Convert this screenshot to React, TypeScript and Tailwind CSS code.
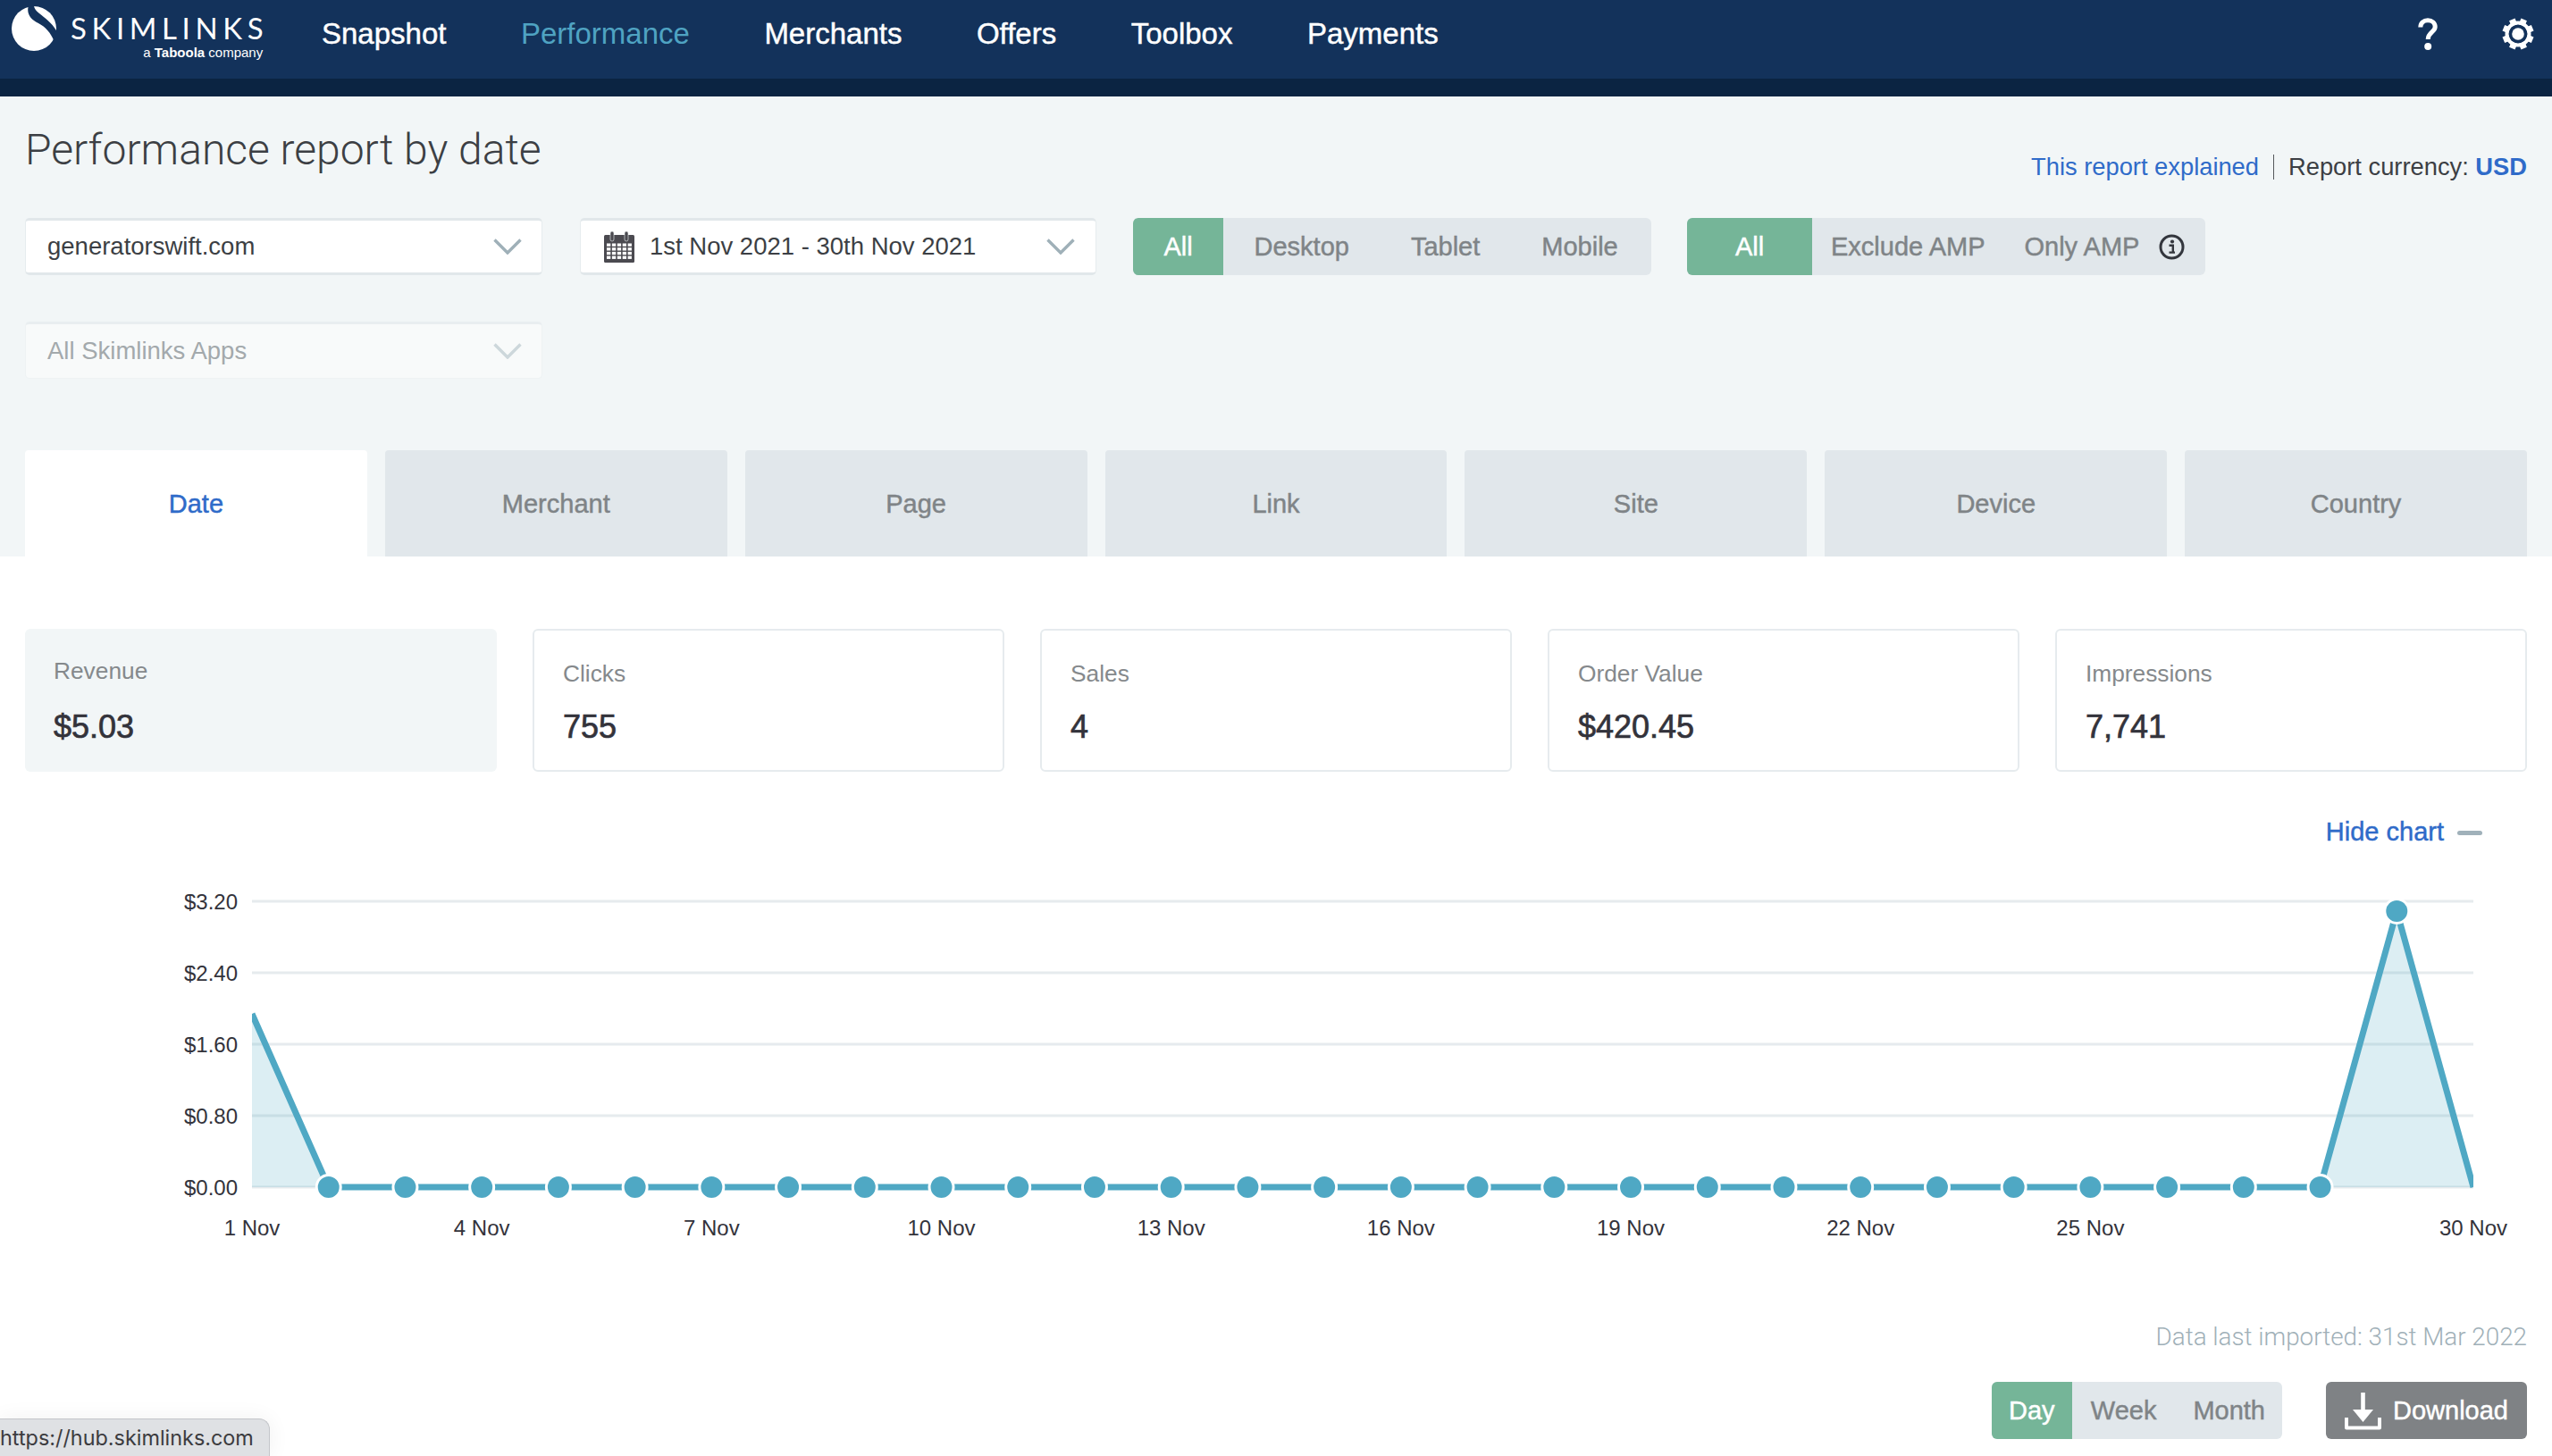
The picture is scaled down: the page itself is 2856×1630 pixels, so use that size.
const navItems = ["Snapshot", "Performance", "Merchants", "Offers", "Toolbox", "Payments"];
const tabs = ["Date", "Merchant", "Page", "Link", "Site", "Device", "Country"];
const metrics = [
  { label: "Revenue", value: "$5.03", active: true },
  { label: "Clicks", value: "755" },
  { label: "Sales", value: "4" },
  { label: "Order Value", value: "$420.45" },
  { label: "Impressions", value: "7,741" },
];

// chart geometry, in page pixels (the svg viewBox lines up with the page)
const left = 282;
const right = 2768;
const base = 1329;
const step = (right - left) / 29;
const px = (i: number) => left + i * step;
const values = Array.from({ length: 30 }, (_, i) => (i === 0 ? 1.94 : i === 28 ? 3.09 : 0));
const py = (v: number) => base - v * 100;
const linePoints = values.map((v, i) => `${px(i)},${py(v)}`).join(" ");
const yTicks = ["$3.20", "$2.40", "$1.60", "$0.80", "$0.00"];
const xTicks = [
  [0, "1 Nov"],
  [3, "4 Nov"],
  [6, "7 Nov"],
  [9, "10 Nov"],
  [12, "13 Nov"],
  [15, "16 Nov"],
  [18, "19 Nov"],
  [21, "22 Nov"],
  [24, "25 Nov"],
  [29, "30 Nov"],
] as const;

const Logo = () => (
  <div className="flex items-start w-[293px] h-[70px] pl-[13px] pt-[7px]">
    <svg width="50" height="50" viewBox="0 0 50 50" className="shrink-0">
      <circle cx="25" cy="25" r="25" fill="#fff" />
      <path d="M19 -1 C16 9 22 15 30 19 C38 23 44 30 47.5 39 L51 29 C46 19 37 13 31 8 C27 5 25 2 25 -1 Z" fill="#13325b" />
    </svg>
    <div className="ml-[16px] flex flex-col items-end text-white">
      <div className="font-['Lato',sans-serif] font-normal text-[33px] leading-[30px] mt-[9px] tracking-[5.6px] mr-[-6px]">SKIMLINKS</div>
      <div className="text-[15px] leading-[18px] mt-[4px] whitespace-nowrap">
        a <span className="font-bold">Taboola</span> company
      </div>
    </div>
  </div>
);

const Chevron = ({ light }: { light?: boolean }) => (
  <svg width="32" height="18" viewBox="0 0 32 18" fill="none" stroke={light ? "#cdd7db" : "#9fb0b8"} strokeWidth="3.4">
    <path d="M1.5 1.5 L16 16 L30.5 1.5" />
  </svg>
);

const CalendarIcon = () => (
  <svg width="34" height="35" viewBox="0 0 34 35" className="shrink-0">
    <rect x="0" y="4" width="34" height="31" rx="1.5" fill="#4b4a50" />
    <rect x="7" y="0" width="4" height="11" rx="2" fill="#4b4a50" stroke="#f2f6f7" strokeWidth="0.6" />
    <rect x="23" y="0" width="4" height="11" rx="2" fill="#4b4a50" stroke="#f2f6f7" strokeWidth="0.6" />
    {[0, 1, 2, 3].map((r) =>
      [0, 1, 2, 3, 4].map((c) => (
        <rect key={`${r}-${c}`} x={3 + c * 5.9} y={13.5 + r * 4.7} width="4.3" height="3.3" fill="#fff" />
      )),
    )}
  </svg>
);

const InfoIcon = () => (
  <svg width="29" height="29" viewBox="0 0 29 29" fill="none" className="shrink-0">
    <circle cx="14.5" cy="14.5" r="12.5" stroke="#33363d" strokeWidth="3" />
    <circle cx="15" cy="8.5" r="2.1" fill="#33363d" />
    <path d="M11.5 12.8 H15.8 V20.6 H18 M11.5 20.6 H15.8" stroke="#33363d" strokeWidth="2.4" />
  </svg>
);

const GearIcon = () => (
  <svg width="36" height="36" viewBox="0 0 36 36">
    {[22.5, 67.5, 112.5, 157.5, 202.5, 247.5, 292.5, 337.5].map((a) => (
      <rect key={a} x="14.5" y="0.5" width="7" height="7" fill="#fff" transform={`rotate(${a} 18 18)`} />
    ))}
    <circle cx="18" cy="18" r="12.5" fill="none" stroke="#fff" strokeWidth="4" />
    <circle cx="18" cy="18" r="6.8" fill="#fff" />
  </svg>
);

const HelpIcon = () => (
  <svg width="22" height="36" viewBox="0 0 22 36" fill="none">
    <path d="M2.8 10.5 C2.8 5.5 6.3 2.8 11 2.8 C15.8 2.8 19.2 5.8 19.2 10 C19.2 16 11.2 16 11.2 24" stroke="#fff" strokeWidth="5" />
    <circle cx="11.2" cy="32" r="4" fill="#fff" />
  </svg>
);

const DownloadIcon = () => (
  <svg width="41" height="42" viewBox="0 0 41 42" fill="none" className="shrink-0">
    <path d="M20.5 0 V24" stroke="#fff" strokeWidth="4.6" />
    <path d="M9 19 H32 L20.5 33 Z" fill="#fff" />
    <path d="M2 28 V39.5 H39 V28" stroke="#fff" strokeWidth="4" strokeLinejoin="round" />
  </svg>
);

const Segment = ({ active, children, className }: { active?: boolean; children: React.ReactNode; className?: string }) => (
  <div
    className={`flex items-center justify-center h-full pt-[2px] ${active ? "bg-[#75b598] text-white" : "text-[#7f8487]"} ${className ?? ""}`}
  >
    {children}
  </div>
);

const medium = "[-webkit-text-stroke:0.45px_currentColor]";

export default function App() {
  return (
    <div className="relative w-full h-[1630px] overflow-hidden bg-white font-['Liberation_Sans',sans-serif] text-[#3c3f44]">
      <header className="bg-[#0b2442] h-[108px]">
        <div className="flex items-start justify-between h-[88px] bg-[#13325b] pr-[20px]">
          <div className="flex items-start">
            <Logo />
            <nav className="flex gap-[83.5px] ml-[67px] pt-[19px]">
              {navItems.map((item) => (
                <a
                  key={item}
                  className={`text-[33px] leading-[38px] ${item === "Performance" ? "text-[#4fa3c2]" : `text-white ${medium}`}`}
                >
                  {item}
                </a>
              ))}
            </nav>
          </div>
          <div className="flex items-start gap-[72px] pt-[20px]">
            <HelpIcon />
            <GearIcon />
          </div>
        </div>
      </header>

      <section className="bg-[#f2f6f7] px-[28px] h-[515px]">
        <div className="flex justify-between items-start h-[136px]">
          <h1 className="font-['Roboto',sans-serif] font-light text-[48px] leading-[64px] pt-[28px] text-[#3c3f44]">
            Performance report by date
          </h1>
          <div className="flex items-center mt-[65px] text-[27.3px] leading-[28px]">
            <a className="text-[#2f6bc9]">This report explained</a>
            <span className="w-[1px] h-[28px] bg-[#55585c] mx-[16px]" />
            <span>Report currency:&nbsp;</span>
            <strong className="text-[#2f6bc9]">USD</strong>
          </div>
        </div>

        <div className="flex items-start">
          <div className="flex items-center justify-between w-[579px] h-[64px] pl-[24px] pr-[22px] bg-white rounded-[5px] border border-[#e6ecee] border-t-[3px] border-t-[#e1e7ea] border-b-[3px] border-b-[#e1e7ea]">
            <span className="text-[27.5px]">generatorswift.com</span>
            <Chevron />
          </div>
          <div className="ml-[42px] flex items-center w-[578px] h-[64px] pl-[26px] pr-[23px] bg-white rounded-[5px] border border-[#e6ecee] border-t-[3px] border-t-[#e1e7ea] border-b-[3px] border-b-[#e1e7ea]">
            <CalendarIcon />
            <span className="ml-[17px] text-[27.5px] flex-1">1st Nov 2021 - 30th Nov 2021</span>
            <Chevron />
          </div>
          <div className={`ml-[41px] flex items-center h-[64px] w-[580px] rounded-[6px] overflow-hidden bg-[#e1e7eb] text-[29px] ${medium}`}>
            <Segment active className="w-[101px]">All</Segment>
            <Segment className="px-[34.5px]">Desktop</Segment>
            <Segment className="px-[34.5px]">Tablet</Segment>
            <Segment className="px-[34.5px]">Mobile</Segment>
          </div>
          <div className={`ml-[40px] flex items-center h-[64px] w-[580px] rounded-[6px] overflow-hidden bg-[#e1e7eb] text-[29px] ${medium}`}>
            <Segment active className="w-[140px]">All</Segment>
            <Segment className="pl-[21px] pr-[22px]">Exclude AMP</Segment>
            <Segment className="pl-[22px] pr-[22px]">Only AMP</Segment>
            <InfoIcon />
          </div>
        </div>

        <div className="mt-[52px] flex items-center justify-between w-[579px] h-[64px] pl-[24px] pr-[22px] bg-[#f8fafa] rounded-[5px] border border-[#eef2f3] border-t-[3px] border-t-[#e9eef0]">
          <span className="text-[27.5px] text-[#a3a9ac]">All Skimlinks Apps</span>
          <Chevron light />
        </div>

        <div className="grid grid-cols-7 gap-[20px] mt-[80px] h-[119px]">
          {tabs.map((tab, i) => (
            <div
              key={tab}
              className={`flex items-center justify-center pt-[2px] rounded-t-[4px] text-[29px] ${medium} ${i === 0 ? "bg-white text-[#2f6bc9]" : "bg-[#e1e7eb] text-[#7f8487]"}`}
            >
              {tab}
            </div>
          ))}
        </div>
      </section>

      <section className="px-[28px]">
        <div className="grid grid-cols-5 gap-[40px] pt-[81px]">
          {metrics.map((m) => (
            <div
              key={m.label}
              className={`h-[160px] rounded-[6px] ${m.active ? "bg-[#f2f6f7] pl-[32px] pt-[30px]" : "bg-white border-2 border-[#e6ebee] pl-[32px] pt-[31px]"}`}
            >
              <div className="text-[26.3px] leading-[34px] text-[#85898c]">{m.label}</div>
              <div className={`text-[36px] leading-[40px] text-[#33333b] [-webkit-text-stroke:0.7px_currentColor] ${m.active ? "mt-[26px]" : "mt-[23px]"}`}>{m.value}</div>
            </div>
          ))}
        </div>

        <div className="flex items-center justify-end h-[40px] mt-[48px] pr-[50px]">
          <a className={`text-[29px] text-[#2f6bc9] ${medium}`}>Hide chart</a>
          <span className="ml-[15px] w-[28px] h-[5px] rounded-full bg-[#a0b1ba]" />
        </div>
      </section>

      <svg width="2856" height="440" viewBox="0 952 2856 440" className="block font-['Liberation_Sans',sans-serif]">
        <defs>
          <clipPath id="plot">
            <rect x={left} y="980" width={right - left} height="370" />
          </clipPath>
        </defs>
        {yTicks.map((t, i) => (
          <g key={t}>
            <line x1={left} x2={right} y1={1009 + i * 80} y2={1009 + i * 80} stroke="#e6ebee" strokeWidth="3" />
            <text x="266" y={1018 + i * 80} textAnchor="end" fontSize="24" fill="#33333b">
              {t}
            </text>
          </g>
        ))}
        {xTicks.map(([i, t]) => (
          <text key={t} x={px(i)} y="1383" textAnchor="middle" fontSize="24" fill="#33333b">
            {t}
          </text>
        ))}
        <g clipPath="url(#plot)">
          <polygon points={`${left},${base} ${linePoints} ${right},${base}`} fill="#4fa8c4" fillOpacity="0.2" />
          <polyline points={linePoints} fill="none" stroke="#4fa8c4" strokeWidth="7" />
        </g>
        {values.slice(1, 29).map((v, i) => (
          <circle key={i} cx={px(i + 1)} cy={py(v)} r="13.5" fill="#4fa8c4" stroke="#fff" strokeWidth="3" />
        ))}
      </svg>

      <section className="px-[28px]">
        <div className="text-right text-[27.8px] leading-[32px] font-['Roboto',sans-serif] font-light text-[#a0b0b8] mt-[89px]">
          Data last imported: 31st Mar 2022
        </div>
        <div className="flex justify-end items-center gap-[49px] mt-[34px]">
          <div className={`flex items-center h-[64px] rounded-[6px] overflow-hidden bg-[#e1e7eb] text-[29px] ${medium}`}>
            <Segment active className="w-[90px]">Day</Segment>
            <Segment className="pl-[21px] pr-[20.5px]">Week</Segment>
            <Segment className="pl-[20.5px] pr-[19px]">Month</Segment>
          </div>
          <div className={`flex items-center h-[64px] w-[225px] pl-[21px] pt-[1px] gap-[13px] rounded-[6px] bg-[#7f8285] text-white text-[29px] ${medium}`}>
            <DownloadIcon />
            Download
          </div>
        </div>
      </section>

      {/* browser link preview, sits on top of the page */}
      <div className="absolute left-0 bottom-0 w-[302px] h-[42px] flex items-center bg-[#dfe1e4] border-t border-r border-[#c4c6ca] rounded-tr-[12px] shadow-[0_0_24px_rgba(0,0,0,0.06)] font-['Inter',sans-serif] text-[23.4px] text-[#3c3c3f] whitespace-nowrap">
        https://hub.skimlinks.com
      </div>
    </div>
  );
}
